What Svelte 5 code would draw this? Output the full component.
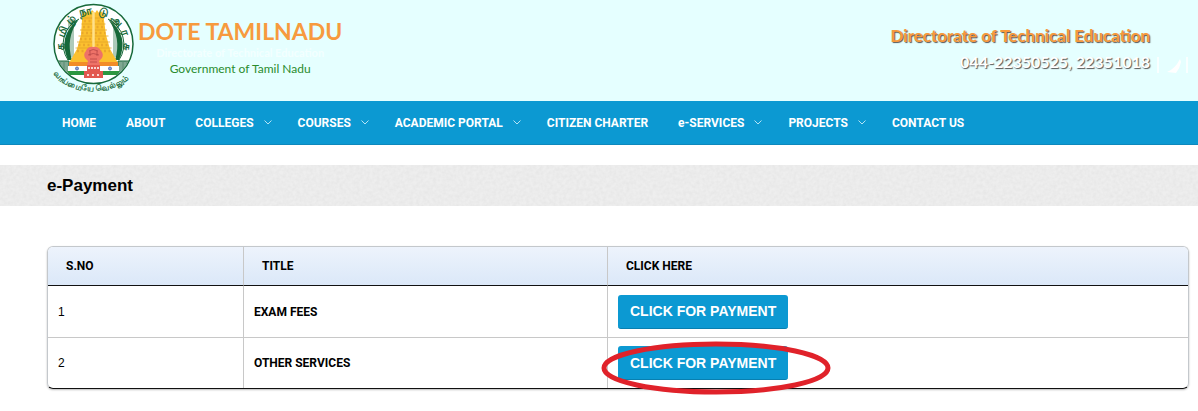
<script lang="ts">
	const menu = [
		{ label: 'HOME', sub: false },
		{ label: 'ABOUT', sub: false },
		{ label: 'COLLEGES', sub: true },
		{ label: 'COURSES', sub: true },
		{ label: 'ACADEMIC PORTAL', sub: true },
		{ label: 'CITIZEN CHARTER', sub: false },
		{ label: 'e-SERVICES', sub: true },
		{ label: 'PROJECTS', sub: true },
		{ label: 'CONTACT US', sub: false }
	];

	const payments = [
		{ id: 1, title: 'EXAM FEES', marked: false },
		{ id: 2, title: 'OTHER SERVICES', marked: true }
	];

	// letters round the emblem, with their angle from the top
	const letters = [
		{ char: 'த', angle: -94 },
		{ char: 'மி', angle: -68 },
		{ char: 'ழ்', angle: -42 },
		{ char: 'நா', angle: -14 },
		{ char: 'டு', angle: 18 },
		{ char: 'அ', angle: 45 },
		{ char: 'ர', angle: 71 },
		{ char: 'சு', angle: 95 }
	];

	// tiers of the temple tower, top to bottom
	const tiers = [
		{ y: 18, w: 22 },
		{ y: 24, w: 24 },
		{ y: 30, w: 27 },
		{ y: 36, w: 30 },
		{ y: 42, w: 33 },
		{ y: 48, w: 36 }
	];

	const rays = Array.from({ length: 19 }, (_, i) => 20 + i * 2);
</script>

<header class="top">
	<svg class="logo" viewBox="0 0 84 94" role="img" aria-label="Government of Tamil Nadu emblem">
		<defs>
			<path id="foot" d="M1 74 C17 97 67 97 82 73" />
			<clipPath id="disc"><circle cx="41.500" cy="44" r="39" /></clipPath>
		</defs>
		<circle cx="41.500" cy="44" r="39.500" fill="#fff" stroke="#17693a" stroke-width="1.500" />
		<path d="M27 19 A28 28 0 0 0 16 60M56 19 A28 28 0 0 1 67 60" fill="none" stroke="#17693a" />
		<path d="M27 19 Q5 36 16 60 L20 60 Q13 38 27 19Z" fill="#17693a" />
		<path d="M56 19 Q78 36 67 60 L63 60 Q70 38 56 19Z" fill="#17693a" />
		{#each rays as y}
			<path d="M16 {y}h6M61 {y}h6" stroke="#17693a" stroke-width="0.700" />
		{/each}
		<g clip-path="url(#disc)">
			<path d="M0 61h17v14H0zM66 61h18v14H66z" fill="#7fa892" stroke="#17693a" />
			<path d="M4 61v14M8 61v14M12 61v14M71 61v14M75 61v14M79 61v14" stroke="#5c8b72" />
		</g>
		<path d="M30 15l2-4 2 2 2-3 2 3 2-3 3 3 2-3 2 3 2-2 3 4v5l2 15 4 14 8 14H17l8-14 4-14 1-15z" fill="#fbc02f" />
		{#each tiers as tier}
			<path d="M{41.5 - tier.w / 2} {tier.y}h{tier.w}" stroke="#e3a326" stroke-width="0.800" />
			<path d="M{43 - tier.w / 2} {tier.y + 3}h{tier.w - 3}" stroke="#eaa82a" stroke-width="2.500" stroke-dasharray="2 2.500" />
		{/each}
		<path d="M41.500 12v36" stroke="#ffe08a" stroke-width="2.500" />
		<path d="M17 62h49v4H17z" fill="#f28c28" />
		<path d="M16 66h51v5H16z" fill="#fff" />
		<path d="M15 71h53l-3 4H18z" fill="#2c9640" />
		<circle cx="25" cy="68.500" r="1.500" fill="#8e9fd6" stroke="#5372b7" />
		<circle cx="58" cy="68.500" r="1.500" fill="#8e9fd6" stroke="#5372b7" />
		<path d="M34 51q-3 3-1 7l3 3-1 5h13l-1-5 3-3q2-4-1-7-3-5-7.500-4Q36 46 34 51z" fill="#ee7268" />
		<path d="M37 51q4-3 9 0M36 55q5-3 11 0M38 59h7M38 62h7M38 51v5M45 51v5" fill="none" stroke="#b84747" stroke-width="0.800" />
		<path d="M35 65h13v6H35zM32 71h19v7H32z" fill="#e2574f" />
		<path d="M35 75h3m2 0h3m2 0h3M36 68h11" stroke="#fff" stroke-width="1.500" stroke-dasharray="2 1" />
		{#each letters as letter}
			<text class="letter" x="41.500" y="14" transform="rotate({letter.angle} 41.500 44)">{letter.char}</text>
		{/each}
		<text class="motto"><textPath href="#foot">வாய்மையே வெல்லும்</textPath></text>
	</svg>
	<div class="brand">
		<h1>DOTE TAMILNADU</h1>
		<p class="dept">Directorate of Technical Education</p>
		<p class="gov">Government of Tamil Nadu</p>
	</div>
	<div class="contact">
		<p class="office">Directorate of Technical Education</p>
		<p class="phone">044-22350525, 22351018</p>
	</div>
	<svg class="marks" viewBox="0 0 34 18" aria-hidden="true">
		<path d="M2 1v16M31 1v16" stroke="#fff" stroke-width="1.500" />
		<path d="M11 16q8-3 13-13l1 3q-1 6-5 11z" fill="#fff" />
	</svg>
</header>

<nav class="menu">
	{#each menu as item}
		<a href="/">
			{item.label}
			{#if item.sub}
				<svg viewBox="0 0 8 5" aria-hidden="true"><path d="M.5.5 4 4 7.500.5" /></svg>
			{/if}
		</a>
	{/each}
</nav>

<div class="band">
	<svg class="grain" aria-hidden="true">
		<filter id="paper">
			<feTurbulence type="fractalNoise" baseFrequency="0.300" numOctaves="2" />
			<feColorMatrix values="0 0 0 0 0.500  0 0 0 0 0.500  0 0 0 0 0.500  0.250 0 0 0 -0.070" />
		</filter>
		<rect width="100%" height="100%" filter="url(#paper)" />
	</svg>
	<h2>e-Payment</h2>
</div>

<main>
	<table>
		<thead>
			<tr>
				<th class="no">S.NO</th>
				<th class="title">TITLE</th>
				<th>CLICK HERE</th>
			</tr>
		</thead>
		<tbody>
			{#each payments as row}
				<tr>
					<td>{row.id}</td>
					<td class="name">{row.title}</td>
					<td>
						<div class="action">
							<button type="button">CLICK FOR PAYMENT</button>
							{#if row.marked}
								<svg class="circle" viewBox="0 0 230 54" aria-hidden="true">
									<ellipse cx="115" cy="27" rx="112" ry="24" />
								</svg>
							{/if}
						</div>
					</td>
				</tr>
			{/each}
		</tbody>
	</table>
</main>

<style>
	:global(body) {
		margin: 0;
		background: #fff;
		color: #000;
		font-family: 'Liberation Sans', Arial, sans-serif;
	}

	h1,
	h2,
	p {
		margin: 0;
	}

	.top {
		display: flex;
		align-items: flex-start;
		height: 101px;
		padding: 0 8px 0 52px;
		box-sizing: border-box;
		background: #e5ffff;
		font-family: Lato, sans-serif;
	}

	.logo {
		width: 84px;
		height: 94px;
	}

	.letter {
		font: bold 11px 'Noto Sans', sans-serif;
		fill: #17693a;
		text-anchor: middle;
	}

	.motto {
		font: bold 8px 'Noto Sans', sans-serif;
		fill: #17693a;
	}

	.brand {
		margin-left: 2px;
		padding-top: 16px;
		text-align: center;
	}

	h1 {
		font-size: 23px;
		line-height: 30px;
		color: #f79a3e;
	}

	.dept {
		font-size: 11px;
		font-weight: bold;
		line-height: 14px;
		color: #f3ffff;
	}

	.gov {
		font-size: 12px;
		line-height: 18px;
		color: #2a8c2e;
	}

	.contact {
		margin-left: auto;
		padding-top: 23px;
		text-align: right;
		font-size: 16px;
		font-weight: bold;
		line-height: 26px;
	}

	.office {
		font-size: 17px;
		color: #f7993c;
		text-shadow: 1px 1px 1px #555;
	}

	.phone {
		color: #fff;
		text-shadow: 1px 1px 1px #555;
	}

	.marks {
		width: 34px;
		height: 18px;
		margin: 56px 0 0 6px;
	}

	.menu {
		display: flex;
		gap: 30px;
		height: 44px;
		padding-left: 62px;
		background: #0c99d2;
		border-bottom: 1px solid #0d88bc;
		box-sizing: border-box;
	}

	.menu a {
		display: flex;
		align-items: center;
		color: #fff;
		font: bold 12px Roboto, sans-serif;
		text-decoration: none;
		white-space: nowrap;
	}

	.menu svg {
		width: 8px;
		height: 5px;
		margin: 0 -4px 0 10px;
		fill: none;
		stroke: #b5e3f5;
	}

	.band {
		position: relative;
		margin-top: 20px;
		padding-left: 47px;
		background: #eee;
	}

	.grain {
		position: absolute;
		inset: 0;
		width: 100%;
		height: 100%;
	}

	h2 {
		position: relative;
		font-size: 17px;
		line-height: 41px;
	}

	main {
		padding: 40px 9px 20px 47px;
	}

	table {
		width: 100%;
		border: 1px solid #c4c8cc;
		border-bottom-color: #111;
		border-radius: 6px;
		border-spacing: 0;
		box-shadow: 0 1px 2px #bbb;
		font-size: 12px;
	}

	th {
		height: 38px;
		padding: 0 18px;
		border-bottom: 1px solid #111;
		background: linear-gradient(#edf3fc, #dbe8f8);
		font: bold 12px Roboto, sans-serif;
		text-align: left;
	}

	th:first-child {
		border-top-left-radius: 5px;
	}

	th:last-child {
		border-top-right-radius: 5px;
	}

	td {
		height: 51px;
		padding: 0 10px;
	}

	th + th,
	td + td {
		border-left: 1px solid #c8c8c8;
	}

	tr + tr td {
		height: 50px;
		border-top: 1px solid #c8c8c8;
	}

	.no {
		width: 159px;
	}

	.title {
		width: 327px;
	}

	.name {
		font: bold 12px Roboto, sans-serif;
	}

	.action {
		display: flex;
		position: relative;
	}

	button {
		height: 34px;
		padding: 0 12px;
		border: 0;
		border-bottom: 1px solid #087fb0;
		border-radius: 3px;
		background: #0c99d2;
		color: #fff;
		font: bold 14px 'Liberation Sans', Arial, sans-serif;
		white-space: nowrap;
	}

	.circle {
		position: absolute;
		left: -17px;
		top: -5px;
		width: 230px;
		height: 54px;
		fill: none;
		stroke: #e0222a;
		stroke-width: 5px;
		pointer-events: none;
	}
</style>
